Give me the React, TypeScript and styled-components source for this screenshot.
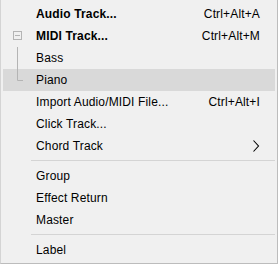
import React from "react";
import styled, { createGlobalStyle } from "styled-components";

const GlobalStyle = createGlobalStyle`
  html, body {
    margin: 0;
    padding: 0;
    background: #f0f0f0;
  }
  body {
    font-family: "Liberation Sans", Arial, sans-serif;
  }
`;

type TreeKind = "box" | "line" | "corner" | undefined;

interface ItemType {
  label?: string;
  shortcut?: string;
  bold?: boolean;
  tree?: TreeKind;
  submenu?: boolean;
  active?: boolean;
  separator?: boolean;
}

const items: ItemType[] = [
  { label: "Audio Track...", shortcut: "Ctrl+Alt+A", bold: true },
  { label: "MIDI Track...", shortcut: "Ctrl+Alt+M", bold: true, tree: "box" },
  { label: "Bass", tree: "line" },
  { label: "Piano", tree: "corner", active: true },
  { label: "Import Audio/MIDI File...", shortcut: "Ctrl+Alt+I" },
  { label: "Click Track..." },
  { label: "Chord Track", submenu: true },
  { separator: true },
  { label: "Group" },
  { label: "Effect Return" },
  { label: "Master" },
  { separator: true },
  { label: "Label" },
];

// tree guide lines in the icon column
const TreeIcon: React.FC<{ kind: TreeKind }> = ({ kind }) => {
  if (kind === "box") {
    return (
      <svg width="28" height="22" viewBox="0 0 28 22">
        <rect x="10.5" y="6.5" width="8" height="8" fill="none" stroke="#b4b4b4" />
        <line x1="12" y1="10.5" x2="17" y2="10.5" stroke="#b4b4b4" />
      </svg>
    );
  }
  if (kind === "line") {
    return (
      <svg width="28" height="22" viewBox="0 0 28 22">
        <line x1="14.5" y1="0" x2="14.5" y2="22" stroke="#b4b4b4" />
      </svg>
    );
  }
  if (kind === "corner") {
    return (
      <svg width="28" height="22" viewBox="0 0 28 22">
        <polyline points="14.5,0 14.5,11.5 20,11.5" fill="none" stroke="#b4b4b4" />
      </svg>
    );
  }
  return null;
};

const Chevron = () => (
  <svg width="8" height="12" viewBox="0 0 8 12">
    <polyline points="1.5,0.5 6.5,6 1.5,11.5" fill="none" stroke="#000" strokeWidth="1.1" />
  </svg>
);

export default function App() {
  return (
    <>
      <GlobalStyle />
      <Menu>
        {items.map((item, i) =>
          item.separator ? (
            <Separator key={i} />
          ) : (
            <Row key={i} $active={item.active}>
              <IconSlot>
                <TreeIcon kind={item.tree} />
              </IconSlot>
              <Label $bold={item.bold}>{item.label}</Label>
              <Shortcut>{item.submenu ? <Chevron /> : item.shortcut}</Shortcut>
            </Row>
          )
        )}
      </Menu>
    </>
  );
}

const Menu = styled.div`
  width: 278px;
  height: 264px;
  box-sizing: border-box;
  background: #f0f0f0;
  border-left: 1px solid #d4d4d4;
  border-right: 1px solid #bcbcbc;
  border-bottom: 1px solid #bcbcbc;
  padding: 3px 2px 0 2px;
  display: flex;
  flex-direction: column;
`;

const Row = styled.div<{ $active?: boolean }>`
  height: 22px;
  display: flex;
  align-items: center;
  background: ${(p) => (p.$active ? "#d9d9d9" : "transparent")};
  color: #000;
  font-size: 12px;
  letter-spacing: 0.15px;
`;

const IconSlot = styled.div`
  width: 28px;
  height: 22px;
  flex-shrink: 0;
  display: flex;
`;

const Label = styled.div<{ $bold?: boolean }>`
  flex: 1;
  padding-left: 5px;
  font-weight: ${(p) => (p.$bold ? 700 : 400)};
  white-space: nowrap;
`;

const Shortcut = styled.div`
  padding-right: 15px;
  display: flex;
  align-items: center;
  white-space: nowrap;
`;

const Separator = styled.div`
  height: 1px;
  margin: 3px 0 4px 28px;
  background: #d4d4d4;
`;
